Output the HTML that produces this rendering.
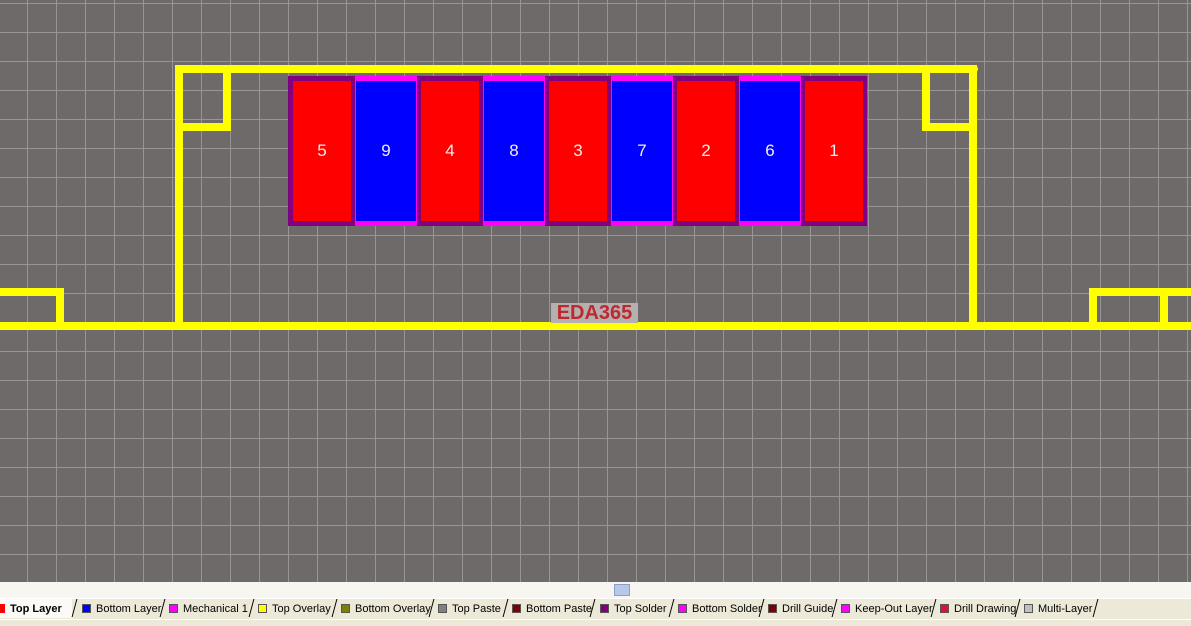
<!DOCTYPE html>
<html><head><style>
*{margin:0;padding:0;box-sizing:border-box}
body{width:1191px;height:626px;overflow:hidden;position:relative;background:#6e6a6a;font-family:"Liberation Sans",sans-serif}
#grid{position:absolute;left:0;top:0;width:1191px;height:582px;
background-image:linear-gradient(to right,#999595 1px,transparent 1px),linear-gradient(to bottom,#999595 1px,transparent 1px);
background-size:29px 29px;background-position:27px 3px}
.y{position:absolute;background:#ffff00}
.a{position:absolute}
.n{position:absolute;color:#f4eeee;font-size:17px;width:60px;text-align:center;top:141px}
#strip{position:absolute;left:0;top:582px;width:1191px;height:16px;background:#f7f6f1}
#tabs{position:absolute;left:0;top:598px;width:1191px;height:21px;background:#ece9d8;border-top:1px solid #fff}
#bot{position:absolute;left:0;top:619px;width:1191px;height:7px;background:#ece9d8;border-top:1px solid #fff}
.t{position:absolute;top:603px;font-size:11px;color:#000;white-space:nowrap}
.t i{display:inline-block;width:9px;height:9px;margin-right:5px;vertical-align:-1px;border:1px solid #555}
.s{position:absolute;top:599px;width:1px;height:18px;background:#000;transform:skewX(-15deg)}
</style></head><body>
<div id="grid"></div>
<div class="y" style="left:175px;top:65px;width:803px;height:8px;border-radius:4px"></div>
<div class="y" style="left:175px;top:65px;width:8px;height:265px"></div>
<div class="y" style="left:969px;top:65px;width:8px;height:265px"></div>
<div class="y" style="left:223px;top:65px;width:8px;height:66px"></div>
<div class="y" style="left:175px;top:123px;width:56px;height:8px;border-radius:4px"></div>
<div class="y" style="left:922px;top:65px;width:8px;height:66px"></div>
<div class="y" style="left:922px;top:123px;width:55px;height:8px"></div>
<div class="y" style="left:0;top:322px;width:1191px;height:8px"></div>
<div class="y" style="left:0;top:288px;width:64px;height:8px;border-radius:0 4px 0 0"></div>
<div class="y" style="left:56px;top:288px;width:8px;height:40px"></div>
<div class="y" style="left:1089px;top:288px;width:102px;height:8px;border-radius:4px 0 0 0"></div>
<div class="y" style="left:1089px;top:288px;width:8px;height:40px"></div>
<div class="y" style="left:1160px;top:288px;width:8px;height:40px"></div>
<div class="a" style="left:288px;top:76px;width:579px;height:150px;background:#800080"></div>
<div class="a" style="left:355px;top:76px;width:62px;height:150px;background:#ff00ff"></div>
<div class="a" style="left:483px;top:76px;width:62px;height:150px;background:#ff00ff"></div>
<div class="a" style="left:611px;top:76px;width:62px;height:150px;background:#ff00ff"></div>
<div class="a" style="left:739px;top:76px;width:62px;height:150px;background:#ff00ff"></div>
<div class="a" style="left:356px;top:81px;width:60px;height:140px;background:#0000ff"></div>
<div class="a" style="left:484px;top:81px;width:60px;height:140px;background:#0000ff"></div>
<div class="a" style="left:612px;top:81px;width:60px;height:140px;background:#0000ff"></div>
<div class="a" style="left:740px;top:81px;width:60px;height:140px;background:#0000ff"></div>
<div class="a" style="left:293px;top:81px;width:58px;height:140px;background:#ff0000"></div>
<div class="a" style="left:421px;top:81px;width:58px;height:140px;background:#ff0000"></div>
<div class="a" style="left:549px;top:81px;width:58px;height:140px;background:#ff0000"></div>
<div class="a" style="left:677px;top:81px;width:58px;height:140px;background:#ff0000"></div>
<div class="a" style="left:805px;top:81px;width:58px;height:140px;background:#ff0000"></div>
<div class="n" style="left:292px">5</div><div class="n" style="left:356px">9</div>
<div class="n" style="left:420px">4</div><div class="n" style="left:484px">8</div>
<div class="n" style="left:548px">3</div><div class="n" style="left:612px">7</div>
<div class="n" style="left:676px">2</div><div class="n" style="left:740px">6</div>
<div class="n" style="left:804px">1</div>
<div class="a" style="left:551px;top:303px;width:87px;height:20px;background:#b4b0b0;color:#c0282f;font-weight:bold;font-size:20px;line-height:20px;text-align:center">EDA365</div>
<div id="strip"></div>
<div class="a" style="left:614px;top:584px;width:16px;height:12px;background:#b8c8e8;border:1px solid #8aa0c8"></div>
<div id="tabs"></div>
<div id="bot"></div>
<div class="a" style="left:0;top:599px;width:72px;height:19px;background:#fbfaf6"></div>
<span class="t" style="left:-4px;font-weight:bold"><i style="background:#f00;border-color:#f00"></i>Top Layer</span>
<span class="t" style="left:82px"><i style="background:#00f"></i>Bottom Layer</span>
<span class="t" style="left:169px"><i style="background:#f0f"></i>Mechanical 1</span>
<span class="t" style="left:258px"><i style="background:#ff0"></i>Top Overlay</span>
<span class="t" style="left:341px"><i style="background:#808000"></i>Bottom Overlay</span>
<span class="t" style="left:438px"><i style="background:#808080"></i>Top Paste</span>
<span class="t" style="left:512px"><i style="background:#800000"></i>Bottom Paste</span>
<span class="t" style="left:600px"><i style="background:#800080"></i>Top Solder</span>
<span class="t" style="left:678px"><i style="background:#f0f"></i>Bottom Solder</span>
<span class="t" style="left:768px"><i style="background:#800000"></i>Drill Guide</span>
<span class="t" style="left:841px"><i style="background:#f0f"></i>Keep-Out Layer</span>
<span class="t" style="left:940px"><i style="background:#e01030"></i>Drill Drawing</span>
<span class="t" style="left:1024px"><i style="background:#c0c0c0"></i>Multi-Layer</span>
<div class="s" style="left:74px"></div><div class="s" style="left:162px"></div>
<div class="s" style="left:251px"></div><div class="s" style="left:334px"></div>
<div class="s" style="left:431px"></div><div class="s" style="left:505px"></div>
<div class="s" style="left:592px"></div><div class="s" style="left:671px"></div>
<div class="s" style="left:761px"></div><div class="s" style="left:834px"></div>
<div class="s" style="left:933px"></div><div class="s" style="left:1017px"></div>
<div class="s" style="left:1095px"></div>
</body></html>
